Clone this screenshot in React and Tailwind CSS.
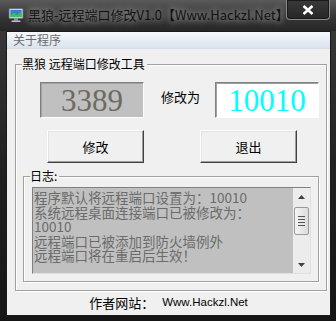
import React from "react";

const cjk = { fontFamily: '"Noto Sans CJK SC", "Liberation Sans", sans-serif' };

const logLines = [
  "程序默认将远程端口设置为：10010",
  "系统远程桌面连接端口已被修改为：",
  "10010",
  "远程端口已被添加到防火墙例外",
  "远程端口将在重启后生效！",
];

const MonitorIcon = () => (
  <svg width="16" height="16" viewBox="0 0 16 16">
    <rect x="1" y="1.5" width="14" height="10" rx="1" fill="#c9d3dc" stroke="#5b6a78" strokeWidth="0.8" />
    <rect x="2.5" y="3" width="11" height="7" fill="#2f7fd8" />
    <path d="M2.5 8.5 L6 5.5 L9 8 L13.5 4.5 L13.5 10 L2.5 10 Z" fill="#3fbf4f" />
    <rect x="6" y="11.5" width="4" height="2" fill="#8d9aa6" />
    <rect x="3.5" y="13.5" width="9" height="1.5" rx="0.5" fill="#b7c2cc" />
  </svg>
);

const GroupBox = ({ label, className, children }) => (
  <div
    className={`relative border border-[#a0a0a0] shadow-[inset_1px_1px_0_#fff,1px_1px_0_#fff] ${className}`}
  >
    <span
      className="absolute -top-[8px] left-[6px] bg-[#f0f0f0] pr-[2px] text-[12px] leading-[14px] text-black"
      style={cjk}
    >
      {label}
    </span>
    {children}
  </div>
);

const Button = ({ children }) => (
  <button
    className="w-[97px] h-[33px] bg-[#f0f0f0] border border-t-[#fff] border-l-[#fff] border-r-[#404040] border-b-[#404040] shadow-[inset_-1px_-1px_0_#a0a0a0,inset_1px_1px_0_#e3e3e3] text-[13px] text-black"
    style={cjk}
  >
    {children}
  </button>
);

export default function App() {
  return (
    <div className="w-[336px] h-[321px] overflow-hidden bg-gradient-to-b from-[#3d3d3d] via-[#222] to-[#151515] flex flex-col relative">
      {/* Title bar */}
      <div className="h-[31px] flex items-center pl-[8px] pb-[1px] bg-gradient-to-b from-[#5a5a5a] via-[#383838] to-[#262626]">
        <MonitorIcon />
        <span
          className="ml-[4px] text-[13px] text-[#111] [text-shadow:0_0_6px_#a8a8a8,0_0_10px_#8a8a8a]"
          style={cjk}
        >
          黑狼-远程端口修改V1.0【Www.Hackzl.Net】
        </span>
      </div>

      {/* Close button */}
      <div className="absolute top-0 left-[286px] w-[44px] h-[20px] rounded-b-[4px] border border-t-0 border-[#8a8a8a] bg-gradient-to-b from-[#3a3a3a] to-[#262626] shadow-[inset_0_0_0_1px_#1a1a1a] flex items-center justify-center">
        <svg width="12" height="10" viewBox="0 0 12 10">
          <path d="M1.5 1 L10.5 9 M10.5 1 L1.5 9" stroke="#fff" strokeWidth="2.6" />
        </svg>
      </div>

      {/* Client area */}
      <div className="ml-[6px] w-[325px] h-[285px] border border-[#1a1a1a] bg-[#f0f0f0] flex flex-col">
        {/* Menu bar */}
        <div className="h-[17px] flex items-center pl-[6px] bg-gradient-to-b from-[#f7f9fc] to-[#dbe3ee] border-b border-[#d6dde8]">
          <span className="text-[12px] leading-[14px] text-[#6a6a6a]" style={cjk}>
            关于程序
          </span>
        </div>

        {/* Main group */}
        <GroupBox label="黑狼 远程端口修改工具" className="mt-[15px] ml-[8px] w-[312px] h-[227px] pt-[17px] pl-[24px]">
          <div className="flex items-center">
            <div className="w-[104px] h-[36px] bg-[#c0c0c0] border border-t-[#808080] border-l-[#808080] border-r-[#fff] border-b-[#fff] shadow-[inset_1px_1px_0_#a0a0a0] flex items-center justify-center">
              <span className="text-[31px] leading-none text-[#6e6a62]" style={{ fontFamily: '"Liberation Serif", serif' }}>
                3389
              </span>
            </div>
            <span className="ml-[17px] -mt-[6px] text-[13px] text-black" style={cjk}>
              修改为
            </span>
            <div className="ml-[15px] w-[104px] h-[36px] bg-white border border-t-[#808080] border-l-[#808080] border-r-[#fff] border-b-[#fff] shadow-[inset_1px_1px_0_#a0a0a0] flex items-center justify-center">
              <span className="text-[31px] leading-none text-[#00ffff]" style={{ fontFamily: '"Liberation Serif", serif' }}>
                10010
              </span>
            </div>
          </div>

          <div className="flex mt-[12px] pl-[7px] gap-[56px]">
            <Button>修改</Button>
            <Button>退出</Button>
          </div>

          {/* Log group */}
          <GroupBox label="日志:" className="mt-[13px] -ml-[17px] w-[296px] h-[106px] pt-[10px] pl-[8px]">
            <div className="w-[279px] h-[87px] bg-[#c0c0c0] border border-t-[#808080] border-l-[#808080] border-r-[#e0e0e0] border-b-[#e0e0e0] flex">
              <div className="flex-1 pl-[1px] pt-[2px] text-[13.5px] leading-[14.5px] text-[#6b6b6b] whitespace-nowrap" style={cjk}>
                {logLines.map((line, i) => (
                  <div key={i} className="h-[14.5px]">{line}</div>
                ))}
              </div>
              {/* Scrollbar */}
              <div className="w-[17px] h-full bg-[#ececec] flex flex-col items-center">
                <div className="h-[17px] flex items-center justify-center">
                  <svg width="7" height="4" viewBox="0 0 7 4">
                    <path d="M0 4 L3.5 0 L7 4 Z" fill="#404040" />
                  </svg>
                </div>
                <div className="mt-[2px] w-[15px] h-[28px] rounded-[2px] border border-[#9a9a9a] bg-gradient-to-r from-[#f4f4f4] to-[#dcdcdc] flex flex-col items-center justify-center gap-[2px]">
                  <div className="w-[7px] h-[1px] bg-[#555]" />
                  <div className="w-[7px] h-[1px] bg-[#555]" />
                  <div className="w-[7px] h-[1px] bg-[#555]" />
                  <div className="w-[7px] h-[1px] bg-[#555]" />
                </div>
                <div className="flex-1" />
                <div className="h-[17px] flex items-center justify-center">
                  <svg width="7" height="4" viewBox="0 0 7 4">
                    <path d="M0 0 L7 0 L3.5 4 Z" fill="#404040" />
                  </svg>
                </div>
              </div>
            </div>
          </GroupBox>
        </GroupBox>

        {/* Footer */}
        <div className="flex-1 flex items-center justify-center gap-[8px] pb-[1px]">
          <span className="text-[13px] text-black" style={cjk}>
            作者网站：
          </span>
          <span className="text-[11.5px] text-black" style={{ fontFamily: '"Liberation Sans", sans-serif' }}>
            Www.Hackzl.Net
          </span>
        </div>
      </div>
    </div>
  );
}
